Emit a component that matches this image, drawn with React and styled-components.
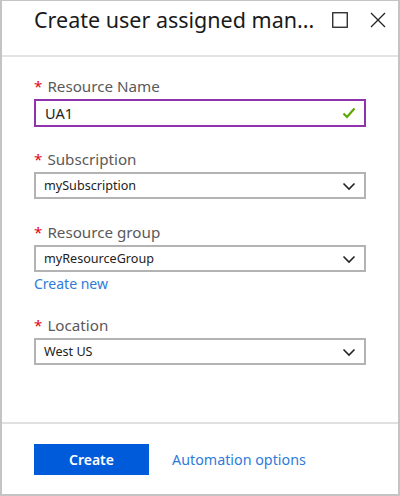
import React from 'react'
import styled, { createGlobalStyle } from 'styled-components'

const GlobalStyle = createGlobalStyle`
  *, *::before, *::after {
    box-sizing: border-box;
  }
  html, body {
    margin: 0;
    padding: 0;
    background: #ffffff;
  }
  body {
    font-family: "Noto Sans", "Open Sans", "Liberation Sans", sans-serif;
  }
`

const Blade = styled.div`
  width: 400px;
  height: 496px;
  border: 2px solid #c4c4c4;
  border-top-width: 1px;
  display: flex;
  flex-direction: column;
  background: #fff;
`

const Header = styled.div`
  height: 56px;
  flex: none;
  border-bottom: 2px solid #e3e3e3;
  display: flex;
  align-items: flex-start;
  padding: 4px 12px 0 32px;
`

const Title = styled.h1`
  margin: 0;
  flex: 1;
  font-size: 21.5px;
  font-weight: 400;
  line-height: 30px;
  color: #1a1a1a;
  white-space: nowrap;
`

const Controls = styled.div`
  display: flex;
  gap: 22px;
  padding-top: 7px;
`

const IconButton = styled.button`
  border: 0;
  background: none;
  padding: 0;
  width: 16px;
  height: 16px;
  display: flex;
  color: #222;
`

const Body = styled.div`
  flex: 1;
  padding: 19px 32px 0 32px;
`

const Field = styled.div`
  margin-bottom: ${p => p.gap || 22}px;
`

const Label = styled.div`
  font-size: 15.2px;
  line-height: 20px;
  color: #5a5a5a;
  margin-bottom: 3px;
`

const Star = styled.span`
  color: #e2001a;
  margin-right: 5px;
`

const Box = styled.div`
  height: ${p => (p.active ? 28 : 27)}px;
  border: ${p => (p.active ? '2px solid #8f34ad' : '2px solid #b3b3b3')};
  display: flex;
  align-items: center;
  justify-content: space-between;
  padding: 0 8px 0 ${p => (p.active ? 9 : 8)}px;
  font-size: ${p => (p.active ? 14.5 : 12.6)}px;
  color: #222;
`

const Link = styled.a`
  display: block;
  font-size: 14px;
  line-height: 20px;
  color: #2f7bd8;
  text-decoration: none;
  margin-top: 2px;
`

const Footer = styled.div`
  flex: none;
  height: 72px;
  border-top: 2px solid #e0e0e0;
  display: flex;
  align-items: flex-start;
  padding: 20px 0 0 32px;
  gap: 23px;
`

const PrimaryButton = styled.button`
  width: 115px;
  height: 31px;
  border: 0;
  background: #005bdb;
  color: #fff;
  font-family: inherit;
  font-size: 14px;
  font-weight: 600;
`

const FooterLink = styled.a`
  font-size: 14.3px;
  line-height: 31px;
  color: #2f7bd8;
  text-decoration: none;
`

const Chevron = () => (
  <svg width="14" height="14" viewBox="0 0 14 14">
    <path d="M1.5 4.5 L7 10 L12.5 4.5" fill="none" stroke="#222" strokeWidth="1.6" />
  </svg>
)

const Check = () => (
  <svg width="14" height="14" viewBox="0 0 14 14">
    <path d="M1.5 7.5 L5 11 L12.5 2.5" fill="none" stroke="#5aa700" strokeWidth="2.2" />
  </svg>
)

function SelectBox({ value }) {
  return (
    <Box>
      <span>{value}</span>
      <Chevron />
    </Box>
  )
}

export default function App() {
  return (
    <>
      <GlobalStyle />
      <Blade>
        <Header>
          <Title>Create user assigned man...</Title>
          <Controls>
            <IconButton aria-label="Maximize">
              <svg width="16" height="16" viewBox="0 0 16 16">
                <rect x="0.75" y="0.75" width="14.5" height="14.5" fill="none" stroke="#222" strokeWidth="1.3" />
              </svg>
            </IconButton>
            <IconButton aria-label="Close">
              <svg width="16" height="16" viewBox="0 0 16 16">
                <path d="M1 1 L15 15 M15 1 L1 15" stroke="#222" strokeWidth="1.3" />
              </svg>
            </IconButton>
          </Controls>
        </Header>

        <Body>
          <Field>
            <Label><Star>*</Star>Resource Name</Label>
            <Box active>
              <span>UA1</span>
              <Check />
            </Box>
          </Field>
          <Field gap={23}>
            <Label><Star>*</Star>Subscription</Label>
            <SelectBox value="mySubscription" />
          </Field>
          <Field gap={21}>
            <Label><Star>*</Star>Resource group</Label>
            <SelectBox value="myResourceGroup" />
            <Link href="#">Create new</Link>
          </Field>
          <Field>
            <Label><Star>*</Star>Location</Label>
            <SelectBox value="West US" />
          </Field>
        </Body>

        <Footer>
          <PrimaryButton>Create</PrimaryButton>
          <FooterLink href="#">Automation options</FooterLink>
        </Footer>
      </Blade>
    </>
  )
}
